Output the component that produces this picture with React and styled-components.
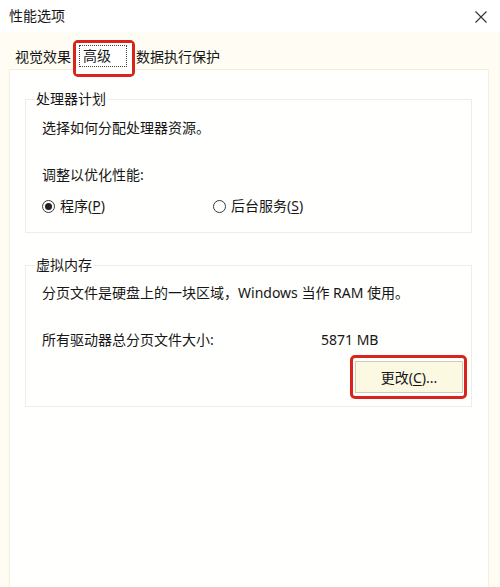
import React from "react";
import styled, { createGlobalStyle } from "styled-components";

const Global = createGlobalStyle`
  html, body { margin: 0; padding: 0; }
  body {
    font-family: "Noto Sans", "Noto Sans CJK SC", sans-serif;
    color: #161616;
    background: #fffdf3;
  }
`;

const Window = styled.div`
  width: 500px;
  height: 587px;
  display: flex;
  flex-direction: column;
  background: #fffdf3;
  overflow: hidden;
`;

const TitleBar = styled.div`
  height: 32px;
  flex: none;
  background: #ffffff;
  display: flex;
  align-items: center;
  justify-content: space-between;
  padding: 0 13px 0 9px;
`;

const Title = styled.span`
  font-size: 14px;
  line-height: 20px;
`;

const Close = styled.svg`
  width: 12px;
  height: 12px;
  margin-top: 2px;
`;

const TabStrip = styled.div`
  flex: none;
  height: 25px;
  margin: 12px 0 0 9px;
  display: flex;
  align-items: flex-start;
`;

const Tab = styled.div`
  font-size: 14px;
  line-height: 25px;
  padding: 0 ${(p) => p.$pr}px 0 ${(p) => p.$pl}px;
  white-space: nowrap;
`;

const Highlight = styled.div`
  position: relative;
  z-index: 2;
  border: 3px solid #d9231d;
  border-radius: 5px;
  margin-top: ${(p) => p.$mt || 0}px;
  padding: ${(p) => p.$pad};
`;

const SelTab = styled.div`
  display: flex;
  padding: 2px 5px 7px 3px;
  background: #ffffff;
`;

const Focus = styled.span`
  border: 1px dotted #444;
  padding: 0 15px 0 3px;
  font-size: 14px;
  line-height: 20px;
  white-space: nowrap;
`;

const Panel = styled.div`
  flex: 1;
  margin: 0 11px 0 9px;
  background: #fffffd;
  border: 1px solid #f3efdb;
  border-bottom: none;
  padding-top: 19px;
`;

const Group = styled.fieldset`
  margin: ${(p) => p.$mt}px 16px 0 15px;
  border: 1px solid #f0eee2;
  padding: ${(p) => p.$pt}px 0 ${(p) => p.$pb}px 16px;
  min-width: 0;
`;

const Legend = styled.legend`
  padding: 0 1px;
  margin-left: -7px;
  font-size: 14px;
  line-height: 20px;
`;

const Line = styled.div`
  font-size: 14px;
  line-height: 20px;
  margin-top: ${(p) => p.$mt || 0}px;
  white-space: nowrap;
`;

const RadioRow = styled.div`
  display: grid;
  grid-template-columns: 171px auto;
  margin-top: 11px;
  height: 20px;
`;

const RadioItem = styled.label`
  display: flex;
  align-items: center;
  gap: 5px;
  font-size: 14px;
  line-height: 20px;
  white-space: nowrap;
`;

const Circle = styled.span`
  box-sizing: border-box;
  width: 13px;
  height: 13px;
  border-radius: 50%;
  border: 1px solid #3a3a3a;
  background: #fff;
  display: flex;
  align-items: center;
  justify-content: center;
  &::after {
    content: "";
    width: 7px;
    height: 7px;
    border-radius: 50%;
    background: ${(p) => (p.$on ? "#222" : "transparent")};
  }
`;

const U = styled.span`
  text-decoration: underline;
  text-underline-offset: 2px;
`;

const SizeRow = styled.div`
  display: grid;
  grid-template-columns: 279px auto;
  font-size: 14px;
  line-height: 20px;
  margin-top: 27px;
  white-space: nowrap;
`;

const ButtonRow = styled.div`
  display: flex;
  justify-content: flex-end;
  margin: 5px 4px 0 0;
`;

const Button = styled.button`
  box-sizing: border-box;
  width: 108px;
  height: 32px;
  border: 1px solid #cfccb6;
  background: #fbf9e2;
  font-family: inherit;
  font-size: 14px;
  color: #161616;
  padding: 0;
  display: block;
`;

export default function App() {
  return (
    <>
      <Global />
      <Window>
        <TitleBar>
          <Title>性能选项</Title>
          <Close viewBox="0 0 12 12">
            <path d="M0.5 0.5 L11.5 11.5 M11.5 0.5 L0.5 11.5" stroke="#333" strokeWidth="1.1" fill="none" />
          </Close>
        </TitleBar>
        <TabStrip>
          <Tab $pl={6} $pr={2}>视觉效果</Tab>
          <Highlight $mt={-4} $pad="0">
            <SelTab>
              <Focus>高级</Focus>
            </SelTab>
          </Highlight>
          <Tab $pl={1} $pr={4}>数据执行保护</Tab>
        </TabStrip>
        <Panel>
          <Group $mt={0} $pt={9} $pb={16}>
            <Legend>处理器计划</Legend>
            <Line>选择如何分配处理器资源。</Line>
            <Line $mt={27}>调整以优化性能:</Line>
            <RadioRow>
              <RadioItem>
                <Circle $on />
                <span>程序(<U>P</U>)</span>
              </RadioItem>
              <RadioItem>
                <Circle />
                <span>后台服务(<U>S</U>)</span>
              </RadioItem>
            </RadioRow>
          </Group>
          <Group $mt={22} $pt={8} $pb={7}>
            <Legend>虚拟内存</Legend>
            <Line>分页文件是硬盘上的一块区域，Windows 当作 RAM 使用。</Line>
            <SizeRow>
              <span>所有驱动器总分页文件大小:</span>
              <span>5871 MB</span>
            </SizeRow>
            <ButtonRow>
              <Highlight $pad="3px 1px 3px 2px">
                <Button>更改(<U>C</U>)...</Button>
              </Highlight>
            </ButtonRow>
          </Group>
        </Panel>
      </Window>
    </>
  );
}
